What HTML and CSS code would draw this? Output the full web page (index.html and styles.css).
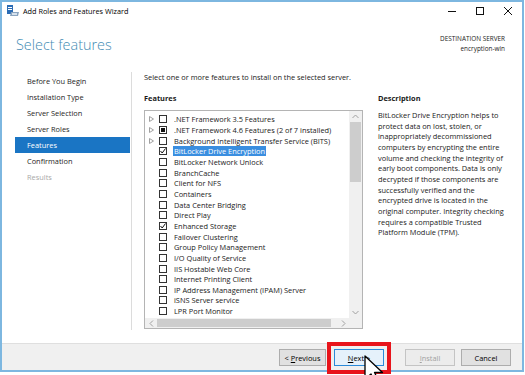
FILE: index.html
```html
<!DOCTYPE html>
<html lang="en">
<head>
    <meta charset="UTF-8">
    <title>Add Roles and Features Wizard</title>
    <link rel="stylesheet" href="styles.css">
</head>
<body>
    <div class="window">
        <div class="titlebar">
            <svg class="app-icon" width="12" height="11" viewBox="0 0 12 11">
                <rect x="0" y="0" width="6" height="9" fill="#2b6cb5"/>
                <rect x="1" y="2" width="4" height="1" fill="#fff"/>
                <rect x="1" y="4" width="4" height="1" fill="#fff"/>
                <polygon points="4,7 12,7 11,11 3,11" fill="#8aa4bf"/>
                <rect x="5" y="8" width="5" height="2" fill="#d6e2ee"/>
            </svg>
            <span class="title">Add Roles and Features Wizard</span>
            <div class="controls">
                <span class="ctl"><svg width="10" height="10" viewBox="0 0 10 10"><line x1="1" y1="5.5" x2="9" y2="5.5" stroke="#111" stroke-width="1"/></svg></span>
                <span class="ctl"><svg width="10" height="10" viewBox="0 0 10 10"><rect x="1.5" y="1.5" width="7" height="7" fill="none" stroke="#111" stroke-width="1"/></svg></span>
                <span class="ctl"><svg width="10" height="10" viewBox="0 0 10 10"><path d="M1 1 L9 9 M9 1 L1 9" stroke="#111" stroke-width="1"/></svg></span>
            </div>
        </div>

        <div class="header">
            <h1>Select features</h1>
            <div class="dest">
                <div>DESTINATION SERVER</div>
                <div>encryption-win</div>
            </div>
        </div>

        <div class="main">
            <ul class="steps">
                <li>Before You Begin</li>
                <li>Installation Type</li>
                <li>Server Selection</li>
                <li>Server Roles</li>
                <li class="active">Features</li>
                <li>Confirmation</li>
                <li class="off">Results</li>
            </ul>

            <div class="content">
                <p class="intro">Select one or more features to install on the selected server.</p>
                <div class="columns">
                    <div class="features">
                        <h2>Features</h2>
                        <div class="listbox">
                            <div class="rows">
                                <div class="row"><span class="exp"><svg width="5" height="6" viewBox="0 0 5 6"><polygon points="0.5,0.5 4.5,3 0.5,5.5" fill="none" stroke="#a0a0a0"/></svg></span><span class="box"></span>.NET Framework 3.5 Features</div>
                                <div class="row"><span class="exp"><svg width="5" height="6" viewBox="0 0 5 6"><polygon points="0.5,0.5 4.5,3 0.5,5.5" fill="none" stroke="#a0a0a0"/></svg></span><span class="box part"></span>.NET Framework 4.6 Features (2 of 7 installed)</div>
                                <div class="row"><span class="exp"><svg width="5" height="6" viewBox="0 0 5 6"><polygon points="0.5,0.5 4.5,3 0.5,5.5" fill="none" stroke="#a0a0a0"/></svg></span><span class="box"></span>Background Intelligent Transfer Service (BITS)</div>
                                <div class="row"><span class="exp"></span><span class="box"><svg width="6" height="6" viewBox="0 0 6 6"><polyline points="0.5,3 2.2,5 5.5,0.5" fill="none" stroke="#111" stroke-width="1"/></svg></span><span class="sel">BitLocker Drive Encryption</span></div>
                                <div class="row"><span class="exp"></span><span class="box"></span>BitLocker Network Unlock</div>
                                <div class="row"><span class="exp"></span><span class="box"></span>BranchCache</div>
                                <div class="row"><span class="exp"></span><span class="box"></span>Client for NFS</div>
                                <div class="row"><span class="exp"></span><span class="box"></span>Containers</div>
                                <div class="row"><span class="exp"></span><span class="box"></span>Data Center Bridging</div>
                                <div class="row"><span class="exp"></span><span class="box"></span>Direct Play</div>
                                <div class="row"><span class="exp"></span><span class="box"><svg width="6" height="6" viewBox="0 0 6 6"><polyline points="0.5,3 2.2,5 5.5,0.5" fill="none" stroke="#111" stroke-width="1"/></svg></span>Enhanced Storage</div>
                                <div class="row"><span class="exp"></span><span class="box"></span>Failover Clustering</div>
                                <div class="row"><span class="exp"></span><span class="box"></span>Group Policy Management</div>
                                <div class="row"><span class="exp"></span><span class="box"></span>I/O Quality of Service</div>
                                <div class="row"><span class="exp"></span><span class="box"></span>IIS Hostable Web Core</div>
                                <div class="row"><span class="exp"></span><span class="box"></span>Internet Printing Client</div>
                                <div class="row"><span class="exp"></span><span class="box"></span>IP Address Management (IPAM) Server</div>
                                <div class="row"><span class="exp"></span><span class="box"></span>iSNS Server service</div>
                                <div class="row"><span class="exp"></span><span class="box"></span>LPR Port Monitor</div>
                            </div>
                            <div class="vscroll">
                                <span class="arrow"><svg width="7" height="5" viewBox="0 0 7 5"><polyline points="0.5,4 3.5,1 6.5,4" fill="none" stroke="#a0a0a0"/></svg></span>
                                <span class="vthumb"></span>
                                <span class="fill"></span>
                                <span class="arrow"><svg width="7" height="5" viewBox="0 0 7 5"><polyline points="0.5,1 3.5,4 6.5,1" fill="none" stroke="#a0a0a0"/></svg></span>
                            </div>
                            <div class="hscroll">
                                <span class="arrow"><svg width="5" height="7" viewBox="0 0 5 7"><polyline points="4,0.5 1,3.5 4,6.5" fill="none" stroke="#a0a0a0"/></svg></span>
                                <span class="hthumb"></span>
                                <span class="fill"></span>
                                <span class="arrow"><svg width="5" height="7" viewBox="0 0 5 7"><polyline points="1,0.5 4,3.5 1,6.5" fill="none" stroke="#a0a0a0"/></svg></span>
                            </div>
                            <div class="corner"></div>
                        </div>
                    </div>
                    <div class="desc">
                        <h2>Description</h2>
                        <p>BitLocker Drive Encryption helps to<br>
                        protect data on lost, stolen, or<br>
                        inappropriately decommissioned<br>
                        computers by encrypting the entire<br>
                        volume and checking the integrity of<br>
                        early boot components. Data is only<br>
                        decrypted if those components are<br>
                        successfully verified and the<br>
                        encrypted drive is located in the<br>
                        original computer. Integrity checking<br>
                        requires a compatible Trusted<br>
                        Platform Module (TPM).</p>
                    </div>
                </div>
            </div>
        </div>

        <div class="footer">
            <button class="btn prev">&lt; <u>P</u>revious</button>
            <button class="btn next"><u>N</u>ext &gt;</button>
            <button class="btn install" disabled><u>I</u>nstall</button>
            <button class="btn cancel">Cancel</button>
        </div>
    </div>

    <div class="callout"></div>
    <svg class="cursor" width="22" height="22" viewBox="0 0 22 22">
        <polygon points="1,1 1,24 7,19 11,27 14.5,25.5 10.5,17.5 18.5,17.5" fill="#fff" stroke="#000" stroke-width="1.3" stroke-linejoin="round"/>
    </svg>
</body>
</html>
```

FILE: styles.css
```css
body {
    margin: 0;
    background: #fff;
    font-family: "Open Sans", "Noto Sans", sans-serif;
    font-size: 7.4px;
    color: #1a1a1a;
}
.window {
    width: 524px;
    height: 372px;
    box-sizing: border-box;
    border: 2px solid #7db7e0;
    background: #fff;
    display: flex;
    flex-direction: column;
}

/* title bar */
.titlebar {
    height: 17px;
    display: flex;
    align-items: center;
    padding-left: 5px;
}
.app-icon {
    margin-right: 4px;
}
.title {
    font-size: 7.3px;
    color: #000;
}
.controls {
    margin-left: auto;
    display: flex;
}
.ctl {
    width: 28px;
    height: 17px;
    display: flex;
    align-items: center;
    justify-content: center;
}

/* header */
.header {
    height: 53px;
    box-sizing: border-box;
    padding: 15px 17px 0 14px;
    display: flex;
    justify-content: space-between;
    align-items: flex-start;
}
.header h1 {
    margin: 0;
    font-size: 14.4px;
    font-weight: 300;
    line-height: 22px;
    color: #3f8bb3;
}
.dest {
    text-align: right;
    font-size: 6.4px;
    line-height: 10px;
    color: #222;
}

/* body */
.main {
    height: 271px;
    display: flex;
    align-items: flex-start;
}
.steps {
    list-style: none;
    margin: 0;
    padding: 1px 1px 0 13px;
    width: 115px;
    height: 257px;
    box-sizing: content-box;
    border-right: 1px solid #dcdcdc;
}
.steps li {
    height: 16px;
    line-height: 16px;
    padding-left: 12px;
    color: #1e1e1e;
}
.steps li.active {
    background: #1a75c4;
    color: #fff;
}
.steps li.off {
    color: #a8a8a8;
}
.content {
    padding-left: 12px;
    height: 257px;
}
.intro {
    margin: 0;
    line-height: 11px;
}
.columns {
    display: flex;
    gap: 15px;
    margin-top: 10px;
}
h2 {
    margin: 0 0 6px;
    font-size: 7.4px;
    font-weight: bold;
    line-height: 11px;
}
.features {
    width: 219px;
}
.listbox {
    height: 219px;
    box-sizing: border-box;
    border: 1px solid #b4b4b4;
    display: grid;
    grid-template-columns: 1fr 13px;
    grid-template-rows: 1fr 10px;
}
.rows {
    overflow: hidden;
    padding-top: 3px;
}
.row {
    height: 10.67px;
    display: flex;
    align-items: center;
    padding-left: 4px;
    white-space: nowrap;
}
.exp {
    width: 6px;
    margin-right: 4px;
    display: flex;
}
.box {
    width: 8px;
    height: 8px;
    box-sizing: border-box;
    border: 1px solid #333;
    margin-right: 7px;
    display: flex;
    align-items: center;
    justify-content: center;
    flex-shrink: 0;
}
.box.part::after {
    content: '';
    width: 4px;
    height: 4px;
    background: #111;
}
.sel {
    background: #3a8ee0;
    color: #fff;
    line-height: 10px;
    padding: 0 1px;
    margin-left: -1px;
}
.vscroll, .hscroll, .corner {
    background: #f0f0f0;
}
.vscroll {
    display: flex;
    flex-direction: column;
}
.vscroll .arrow {
    height: 11px;
    display: flex;
    align-items: center;
    justify-content: center;
}
.vthumb {
    height: 60px;
    margin: 0 1px;
    background: #cdcdcd;
}
.fill {
    flex: 1;
}
.hscroll {
    display: flex;
}
.hscroll .arrow {
    width: 12px;
    display: flex;
    align-items: center;
    justify-content: center;
}
.hthumb {
    width: 174px;
    margin: 1px 0;
    background: #cdcdcd;
}
.desc {
    width: 140px;
}
.desc p {
    margin: 0;
    line-height: 10.67px;
    white-space: nowrap;
}

/* footer */
.footer {
    flex: 1;
    background: #f0f0f0;
    border-top: 1px solid #dfdfdf;
    display: flex;
    justify-content: flex-end;
    align-items: flex-start;
    padding: 5px 11px 0 0;
}
.btn {
    height: 17px;
    width: 50px;
    padding: 0;
    font-family: inherit;
    font-size: 7.4px;
    color: #000;
    background: #e1e1e1;
    border: 1px solid #adadad;
}
.btn.prev {
    width: 47px;
    margin-right: 8px;
}
.btn.next {
    background: #e5f1fb;
    border-color: #2b8ad8;
    margin-right: 21px;
}
.btn.install {
    background: #ececec;
    border-color: #c4c4c4;
    color: #a2a2a2;
    margin-right: 6px;
}

/* annotations over the screenshot */
.callout {
    position: absolute;
    left: 327px;
    top: 342px;
    width: 64px;
    height: 32px;
    box-sizing: border-box;
    border: 4px solid #e8141b;
}
.cursor {
    position: absolute;
    left: 364px;
    top: 355px;
}
```
